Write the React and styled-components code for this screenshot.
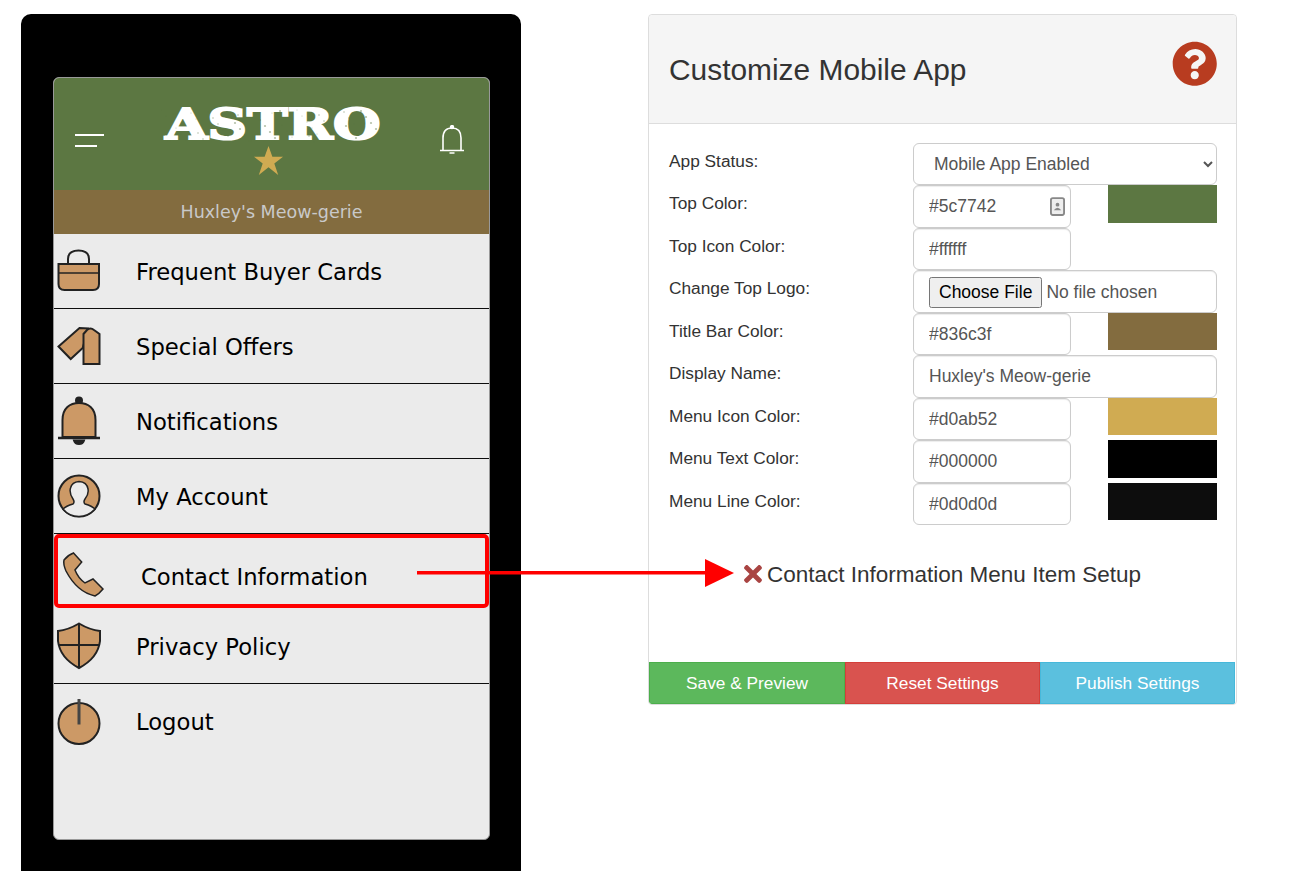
import styled, { createGlobalStyle } from "styled-components";
import { FaQuestionCircle, FaTimes } from "react-icons/fa";

const GlobalStyle = createGlobalStyle`
  html, body {
    margin: 0;
    background: #fff;
    overflow: hidden;
  }
  * {
    box-sizing: border-box;
  }
`;

const menuItems = [
  { label: "Frequent Buyer Cards", icon: <BagIcon /> },
  { label: "Special Offers", icon: <TagsIcon /> },
  { label: "Notifications", icon: <BellIcon /> },
  { label: "My Account", icon: <AccountIcon /> },
  { label: "Contact Information", icon: <PhoneIcon />, active: true },
  { label: "Privacy Policy", icon: <ShieldIcon /> },
  { label: "Logout", icon: <PowerIcon />, last: true },
];

const colorRows = [
  { label: "Top Color:", value: "#5c7742", swatch: "#5c7742", contacts: true },
  { label: "Top Icon Color:", value: "#ffffff" },
];

const colorRowsBottom = [
  { label: "Menu Icon Color:", value: "#d0ab52", swatch: "#d0ab52" },
  { label: "Menu Text Color:", value: "#000000", swatch: "#000000" },
  { label: "Menu Line Color:", value: "#0d0d0d", swatch: "#0d0d0d" },
];

// worn print look on the logo letters
const speckles = Array.from({ length: 60 }, (_, i) => ({
  x: (i * 37) % 217,
  y: 2 + ((i * 23) % 33),
  r: 0.5 + (i % 3) * 0.3,
}));

function BagIcon() {
  return (
    <MenuSvg viewBox="0 0 50 50">
      <path d="M14 18 V13 Q14 4.5 24.5 4.5 Q35 4.5 35 13 V18" fill="none" />
      <path d="M4.5 18 H45 V38 Q45 44 39 44 H10.5 Q4.5 44 4.5 38 Z" />
      <path d="M4.5 27 H45" fill="none" strokeWidth="1.5" />
    </MenuSvg>
  );
}

function TagsIcon() {
  return (
    <MenuSvg viewBox="0 0 50 50">
      <path d="M4.5 25.5 L25.5 7 L34 7.5 L28.7 27 L16.7 38 Z" />
      <path d="M29.5 43 V13 L33 9 Q36.5 6 40 9 L45.5 13 V43 Z" />
    </MenuSvg>
  );
}

function BellIcon() {
  return (
    <MenuSvg viewBox="0 0 50 50">
      <circle cx="25" cy="4.5" r="3" fill="#222" />
      <path d="M8.5 41 V24 C8.5 12 16 7 25 7 C34 7 41.5 12 41.5 24 V41 Z" />
      <path d="M4 42 H46" fill="none" strokeWidth="2.5" />
      <path d="M20 44.5 H30 Q29 48 25 48 Q21 48 20 44.5 Z" fill="#222" />
    </MenuSvg>
  );
}

function AccountIcon() {
  return (
    <MenuSvg viewBox="0 0 50 50">
      <circle cx="25" cy="25" r="20.5" />
      <path
        d="M9 38 Q12 35 19 33 Q21 31 19 28 Q15 22 16.5 17 Q18 11 25 10.5 Q33 11 34 18 Q35 23 31 28 Q29 31 31 33 Q38 35 41 38 Q34 45.5 25 45.5 Q15 45.5 9 38 Z"
        fill="#ebebeb"
        strokeWidth="1.5"
      />
    </MenuSvg>
  );
}

function PhoneIcon() {
  return (
    <MenuSvg viewBox="0 0 50 50">
      <path d="M14.5 1 L22.7 10 L16 18 Q19 26 26 31 L34 27 L44 37 Q40 42 36 44 Q18 40 7 19 Q4 12 5 8 Q9 3 14.5 1 Z" strokeWidth="1.5" />
    </MenuSvg>
  );
}

function ShieldIcon() {
  return (
    <MenuSvg viewBox="0 0 50 50">
      <path d="M25 2.5 Q36 9 46 10 L46 20 Q44 37 25 47 Q6 37 4 20 L4 10 Q14 9 25 2.5 Z" />
      <path d="M25 3 V47 M5 24 H45" fill="none" />
    </MenuSvg>
  );
}

function PowerIcon() {
  return (
    <MenuSvg viewBox="0 0 50 50">
      <circle cx="25" cy="26.5" r="20.5" />
      <path d="M25 2 V27.5" fill="none" strokeWidth="3" stroke="#444" />
    </MenuSvg>
  );
}

function ColorRow({ label, value, swatch, contacts }) {
  return (
    <FormRow>
      <FieldLabel>{label}</FieldLabel>
      <ColorControl>
        <ColorField>
          <TextInput value={value} readOnly />
          {contacts && (
            <ContactsBadge viewBox="0 0 16 20">
              <rect x="1" y="1" width="14" height="18" rx="2" />
              <circle cx="8" cy="8" r="2" fill="#888" stroke="none" />
              <path d="M4 14 Q8 8.5 12 14 Z" fill="#888" stroke="none" />
            </ContactsBadge>
          )}
        </ColorField>
        {swatch && <Swatch $color={swatch} />}
      </ColorControl>
    </FormRow>
  );
}

export default function App() {
  return (
    <Page>
      <GlobalStyle />
      <Phone>
        <Screen>
          <TopBar>
            <Hamburger>
              <span />
              <span />
            </Hamburger>
            <Logo>
              <LogoText>ASTRO</LogoText>
              <LogoWear viewBox="0 0 217 36">
                {speckles.map((s, i) => (
                  <circle key={i} cx={s.x} cy={s.y} r={s.r} />
                ))}
              </LogoWear>
              <LogoStar viewBox="0 0 32 32">
                <polygon points="16,1 20,12 31,12 22,19 26,31 16,23 6,31 10,19 1,12 12,12" />
              </LogoStar>
            </Logo>
            <TopBell viewBox="0 0 26 30">
              <circle cx="13" cy="2" r="1.4" fill="#fff" />
              <path d="M4 25 V13 Q4 3 13 3 Q22 3 22 13 V25" />
              <path d="M1 25.5 H25" />
              <path d="M10.5 28 H15.5" />
            </TopBell>
          </TopBar>
          <TitleBar>Huxley's Meow-gerie</TitleBar>
          {menuItems.map((item) => (
            <MenuRow key={item.label} $active={item.active} $last={item.last}>
              <MenuIcon>{item.icon}</MenuIcon>
              <MenuLabel $active={item.active} $last={item.last}>
                {item.label}
              </MenuLabel>
              {item.active && <Highlight />}
            </MenuRow>
          ))}
        </Screen>
      </Phone>

      <Panel>
        <PanelHeader>
          <PanelTitle>Customize Mobile App</PanelTitle>
          <HelpIcon>
            <FaQuestionCircle />
          </HelpIcon>
        </PanelHeader>
        <PanelBody>
          <FormRow>
            <FieldLabel>App Status:</FieldLabel>
            <SelectInput defaultValue="enabled">
              <option value="enabled">Mobile App Enabled</option>
              <option value="disabled">Mobile App Disabled</option>
            </SelectInput>
          </FormRow>
          {colorRows.map((row) => (
            <ColorRow key={row.label} {...row} />
          ))}
          <FormRow>
            <FieldLabel>Change Top Logo:</FieldLabel>
            <FileInput type="file" />
          </FormRow>
          <ColorRow label="Title Bar Color:" value="#836c3f" swatch="#836c3f" />
          <FormRow>
            <FieldLabel>Display Name:</FieldLabel>
            <TextInput value="Huxley's Meow-gerie" readOnly />
          </FormRow>
          {colorRowsBottom.map((row) => (
            <ColorRow key={row.label} {...row} />
          ))}
          <SetupLine>
            <SetupIcon>
              <FaTimes />
            </SetupIcon>
            Contact Information Menu Item Setup
          </SetupLine>
        </PanelBody>
        <ButtonBar>
          <ActionButton $color="#5cb85c" $border="#4cae4c">Save &amp; Preview</ActionButton>
          <ActionButton $color="#d9534f" $border="#d43f3a">Reset Settings</ActionButton>
          <ActionButton $color="#5bc0de" $border="#46b8da">Publish Settings</ActionButton>
        </ButtonBar>
      </Panel>

      <Arrow viewBox="0 0 320 32">
        <rect x="0" y="13" width="295" height="3.5" fill="#ff0000" />
        <polygon points="288,1 317,15 288,29" fill="#ff0000" />
      </Arrow>
    </Page>
  );
}

const Page = styled.div`
  position: relative;
  display: flex;
  align-items: flex-start;
  width: 1290px;
  height: 871px;
  padding: 14px 0 0 21px;
  overflow: hidden;
  font-family: "Liberation Sans", Arial, sans-serif;
`;

const Phone = styled.div`
  flex: none;
  width: 500px;
  height: 857px;
  padding: 63px 31px 0 32px;
  background: #000;
  border-radius: 10px 10px 0 0;
`;

const Screen = styled.div`
  width: 437px;
  height: 763px;
  background: #ebebeb;
  border: 1px solid #999;
  border-radius: 6px;
  overflow: hidden;
  font-family: "DejaVu Sans", Verdana, sans-serif;
`;

const TopBar = styled.div`
  display: grid;
  grid-template-columns: 1fr auto 1fr;
  align-items: center;
  height: 112px;
  padding: 12px 24px 0 21px;
  background: #5c7742;
`;

const Hamburger = styled.div`
  display: flex;
  flex-direction: column;
  gap: 9px;
  span {
    display: block;
    height: 2px;
    background: #fff;
    width: 29px;
  }
  span:last-child {
    width: 22px;
  }
`;

const Logo = styled.div`
  position: relative;
  display: flex;
  flex-direction: column;
  align-items: center;
  width: 218px;
  margin-top: 4px;
`;

const LogoText = styled.div`
  font-family: "DejaVu Serif", serif;
  font-weight: 700;
  font-size: 42px;
  line-height: 34px;
  margin-left: 5px;
  color: #fff;
  -webkit-text-stroke: 2px #fff;
  transform: scaleX(1.3);
`;

const LogoWear = styled.svg`
  position: absolute;
  left: 0;
  top: 0;
  width: 217px;
  height: 36px;
  fill: #5c7742;
  opacity: 0.45;
`;

const LogoStar = styled.svg`
  width: 31px;
  height: 31px;
  margin: 3px 3px 0 0;
  polygon {
    fill: #d0ab52;
  }
`;

const TopBell = styled.svg`
  justify-self: end;
  width: 26px;
  height: 30px;
  fill: none;
  stroke: #fff;
  stroke-width: 1.6;
`;

const TitleBar = styled.div`
  display: flex;
  align-items: center;
  justify-content: center;
  height: 44px;
  background: #836c3f;
  color: #c9c9c9;
  font-size: 17.5px;
`;

const MenuRow = styled.div`
  position: relative;
  display: flex;
  align-items: center;
  height: 75px;
  padding: ${(p) => (p.$active ? "11px 0 0 5px" : "0")};
  border-bottom: ${(p) => (p.$last || p.$active ? "none" : "1px solid #0d0d0d")};
`;

const MenuIcon = styled.div`
  flex: none;
  width: 50px;
  height: 50px;
`;

const MenuSvg = styled.svg`
  display: block;
  width: 50px;
  height: 50px;
  overflow: visible;
  fill: #cc9966;
  stroke: #222;
  stroke-width: 2;
`;

const MenuLabel = styled.div`
  margin-left: 32px;
  padding-top: ${(p) => (p.$active || p.$last ? "0" : "2px")};
  font-size: 22.7px;
  color: #000;
`;

const Highlight = styled.div`
  position: absolute;
  left: 0;
  right: 0;
  top: 0;
  bottom: 1px;
  border: 4px solid #ff0000;
  border-radius: 5px;
`;

const Panel = styled.div`
  flex: none;
  width: 589px;
  height: 691px;
  margin-left: 127px;
  border: 1px solid #ddd;
  border-radius: 4px;
  display: flex;
  flex-direction: column;
  color: #333;
`;

const PanelHeader = styled.div`
  display: flex;
  align-items: center;
  justify-content: space-between;
  flex: none;
  height: 109px;
  padding: 2px 19px 0 20px;
  background: #f5f5f5;
  border-bottom: 1px solid #ddd;
  border-radius: 4px 4px 0 0;
`;

const PanelTitle = styled.h3`
  margin: 0;
  font-size: 29.9px;
  font-weight: 400;
  color: #333;
`;

const HelpIcon = styled.div`
  display: flex;
  margin-top: -12px;
  font-size: 45.5px;
  color: #b83c20;
`;

const PanelBody = styled.div`
  flex: 1;
  padding: 18.9px 19px 0 20px;
`;

const FormRow = styled.div`
  display: grid;
  grid-template-columns: 244px 1fr;
  height: 42.5px;
`;

const FieldLabel = styled.label`
  padding-top: 7px;
  font-size: 17.3px;
  line-height: 22px;
  color: #333;
`;

const ColorControl = styled.div`
  display: flex;
  gap: 37px;
  align-items: flex-start;
`;

const ColorField = styled.div`
  position: relative;
  flex: none;
  width: 158px;
`;

const TextInput = styled.input`
  display: block;
  width: 100%;
  height: 42.5px;
  padding: 6px 15px;
  font: 17.5px "Liberation Sans", Arial, sans-serif;
  color: #555;
  background: #fff;
  border: 1px solid #ccc;
  border-radius: 6px;
  box-shadow: inset 0 1px 1px rgba(0, 0, 0, 0.075);
  outline: none;
`;

const SelectInput = styled.select`
  display: block;
  width: 100%;
  height: 42.5px;
  padding: 6px 16px;
  font: 17.5px "Liberation Sans", Arial, sans-serif;
  color: #555;
  background: #fff;
  border: 1px solid #ccc;
  border-radius: 6px;
`;

const FileInput = styled.input`
  display: block;
  width: 100%;
  height: 42.5px;
  padding: 6px 15px;
  font: 17.5px "Liberation Sans", Arial, sans-serif;
  color: #555;
  background: #fff;
  border: 1px solid #ccc;
  border-radius: 6px;
  box-shadow: inset 0 1px 1px rgba(0, 0, 0, 0.075);
  &::file-selector-button {
    padding: 3px 8px;
  }
`;

const ContactsBadge = styled.svg`
  position: absolute;
  top: 12px;
  right: 6px;
  width: 15px;
  height: 19px;
  fill: #eee;
  stroke: #888;
  stroke-width: 2;
`;

const Swatch = styled.div`
  flex: none;
  width: 109px;
  height: 37.5px;
  background: ${(p) => p.$color};
`;

const SetupLine = styled.div`
  display: flex;
  align-items: center;
  height: 34px;
  margin-top: 33px;
  padding-left: 71px;
  font-size: 22.5px;
  color: #333;
`;

const SetupIcon = styled.span`
  display: flex;
  margin: -2px 1px 0 0;
  font-size: 26px;
  color: #a94442;
`;

const ButtonBar = styled.div`
  display: grid;
  grid-template-columns: 196px 195px 195px;
  flex: none;
  height: 42px;
  border-radius: 0 0 4px 4px;
  overflow: hidden;
`;

const ActionButton = styled.button`
  padding: 0;
  font: 17.3px "Liberation Sans", Arial, sans-serif;
  color: #fff;
  background: ${(p) => p.$color};
  border: 1px solid ${(p) => p.$border};
`;

const Arrow = styled.svg`
  position: absolute;
  left: 417px;
  top: 558px;
  width: 320px;
  height: 32px;
`;
